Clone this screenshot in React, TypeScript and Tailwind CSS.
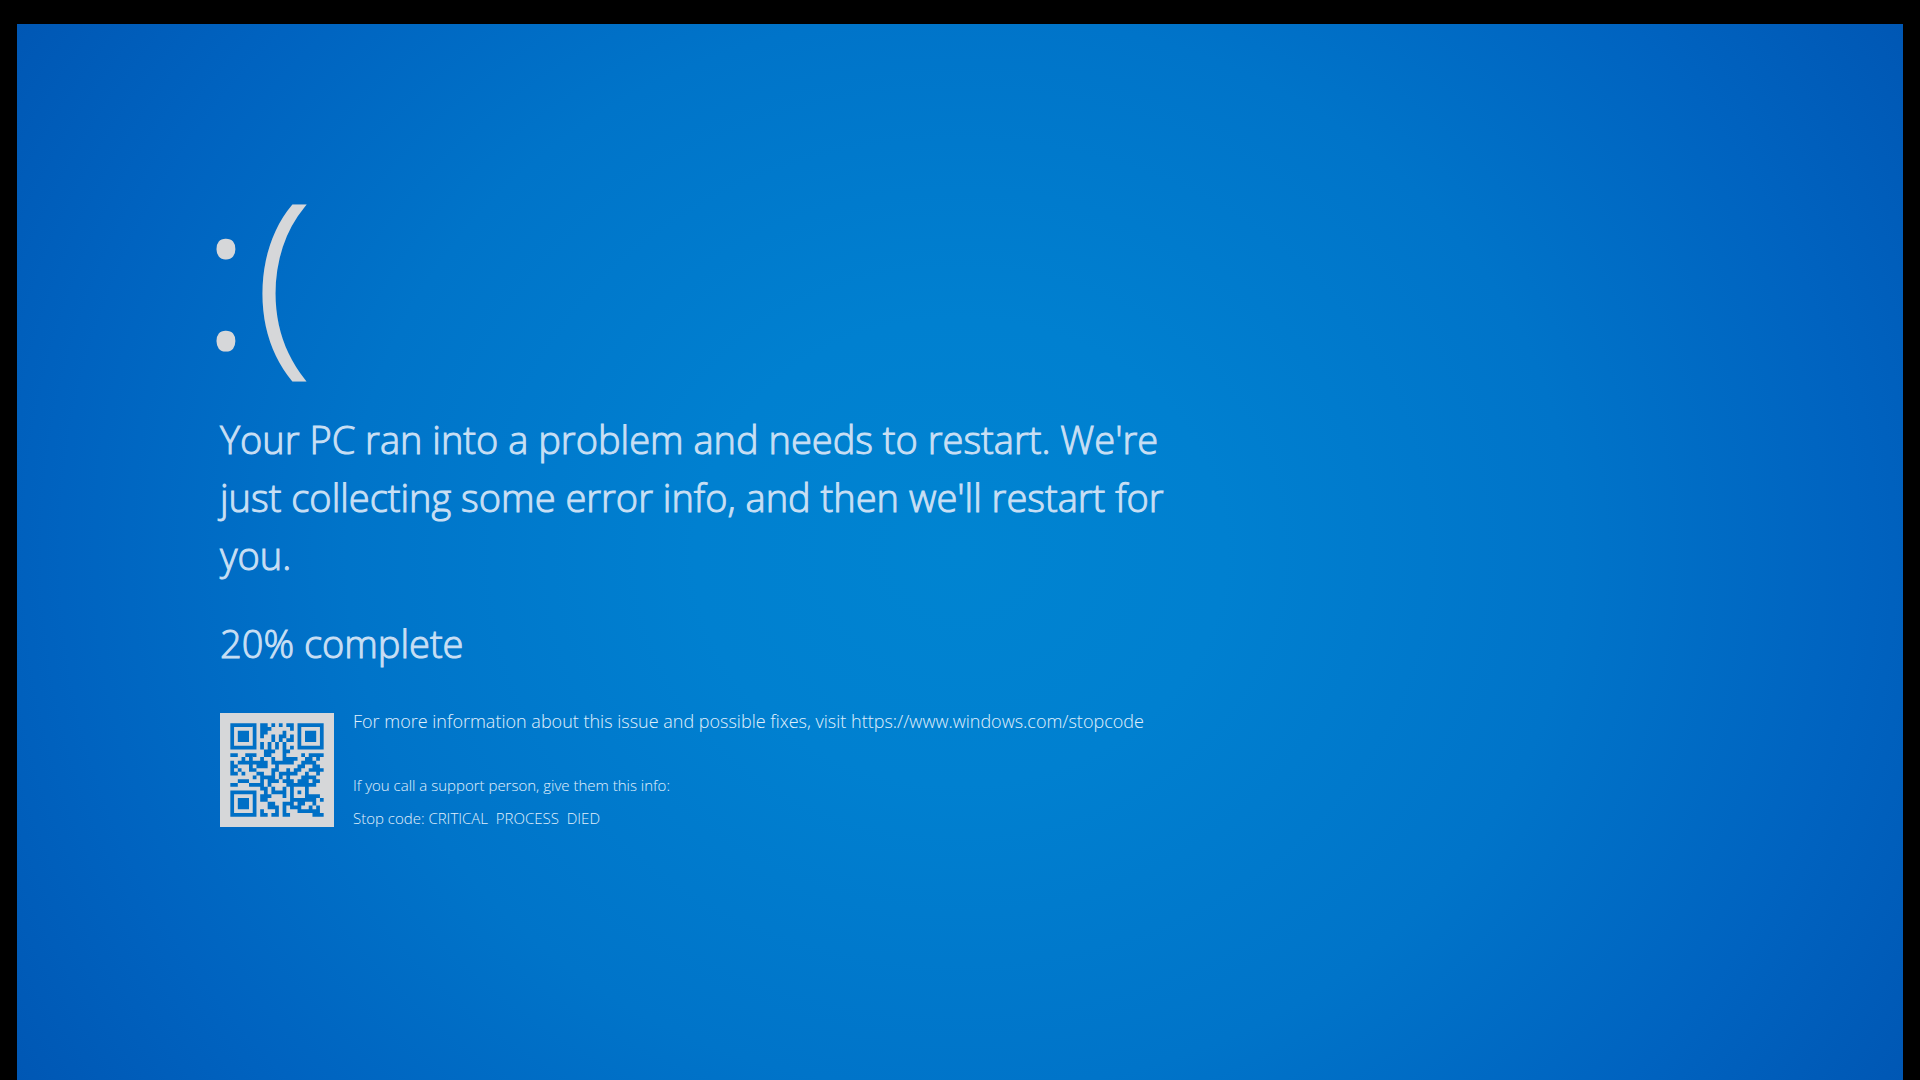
const STOP_URL = 'https://www.windows.com/stopcode';

// QR version 2, one string per row, 1 = dark module
const QR_ROWS = [
  '1111111011010101101111111',
  '1000001011100000101000001',
  '1011101011000010001011101',
  '1011101010010110101011101',
  '1011101000010101101011101',
  '1000001010101010001000001',
  '1111111010101010101111111',
  '0000000001110011000000000',
  '1100111001100010000101111',
  '0001010010010011110011010',
  '1011111111011111100111100',
  '1100010111001000001100110',
  '1010011000011001011001111',
  '1101000110010111110010010',
  '0000001011110101000111100',
  '0011100010111011101110110',
  '1100011110100001111111100',
  '0000000011010010100010000',
  '1111111001011110101010000',
  '1000001011100010100011110',
  '1011101011000000111111101',
  '1011101000110011101100100',
  '1011101000111010111001010',
  '1000001010001010001111110',
  '1111111011011011000000111',
];

const QR_PATH = QR_ROWS.map((row, y) =>
  [...row].map((cell, x) => (cell === '1' ? `M${x} ${y}h1v1h-1z` : '')).join('')
).join('');

function QrCode() {
  return (
    <svg
      viewBox="-2.77 -2.77 30.54 30.54"
      className="size-[114px] shrink-0 bg-[#d6d7d9]"
      role="img"
      aria-label="QR code"
    >
      <path d={QR_PATH} fill="#0070c6" />
    </svg>
  );
}

export default function App() {
  return (
    <div className="flex min-h-screen flex-col bg-black px-[17px] pt-6 font-['Open_Sans',sans-serif] font-light">
      <main className="flex-1 bg-[radial-gradient(ellipse_56%_88%_at_50%_50%,#0084d1_0%,#0080d0_25%,#0074c9_58%,#0063c0_85%,#0057b4_106%)] pt-[147px] pr-8 pb-16 pl-[203px] text-[#c8dff4]">
        {/* pulled left so the dots line up with the text below */}
        <h1 className="-ml-[18px] flex gap-1.5 text-[200px] leading-none font-light text-[#d6d7d9] [-webkit-text-stroke:3px_#d6d7d9]">
          <span>:</span>
          <span>(</span>
        </h1>

        <div className="mt-[39px] max-w-[980px] space-y-[30px] text-[38px] leading-[58px] [-webkit-text-stroke:1px_#c8dff4]">
          <p>
            Your PC ran into a problem and needs to restart. We're just collecting some error info,
            and then we'll restart for you.
          </p>
          <p>20% complete</p>
        </div>

        <div className="mt-[41px] flex items-start gap-[19px]">
          <QrCode />
          <div className="text-[15px] leading-[33px] text-[#e0f0fc]">
            <p className="mb-10 text-[18px] leading-4">
              For more information about this issue and possible fixes, visit{' '}
              <a href={STOP_URL}>{STOP_URL}</a>
            </p>
            <p>If you call a support person, give them this info:</p>
            <p>Stop code: CRITICAL&nbsp; PROCESS&nbsp; DIED</p>
          </div>
        </div>
      </main>
    </div>
  );
}
